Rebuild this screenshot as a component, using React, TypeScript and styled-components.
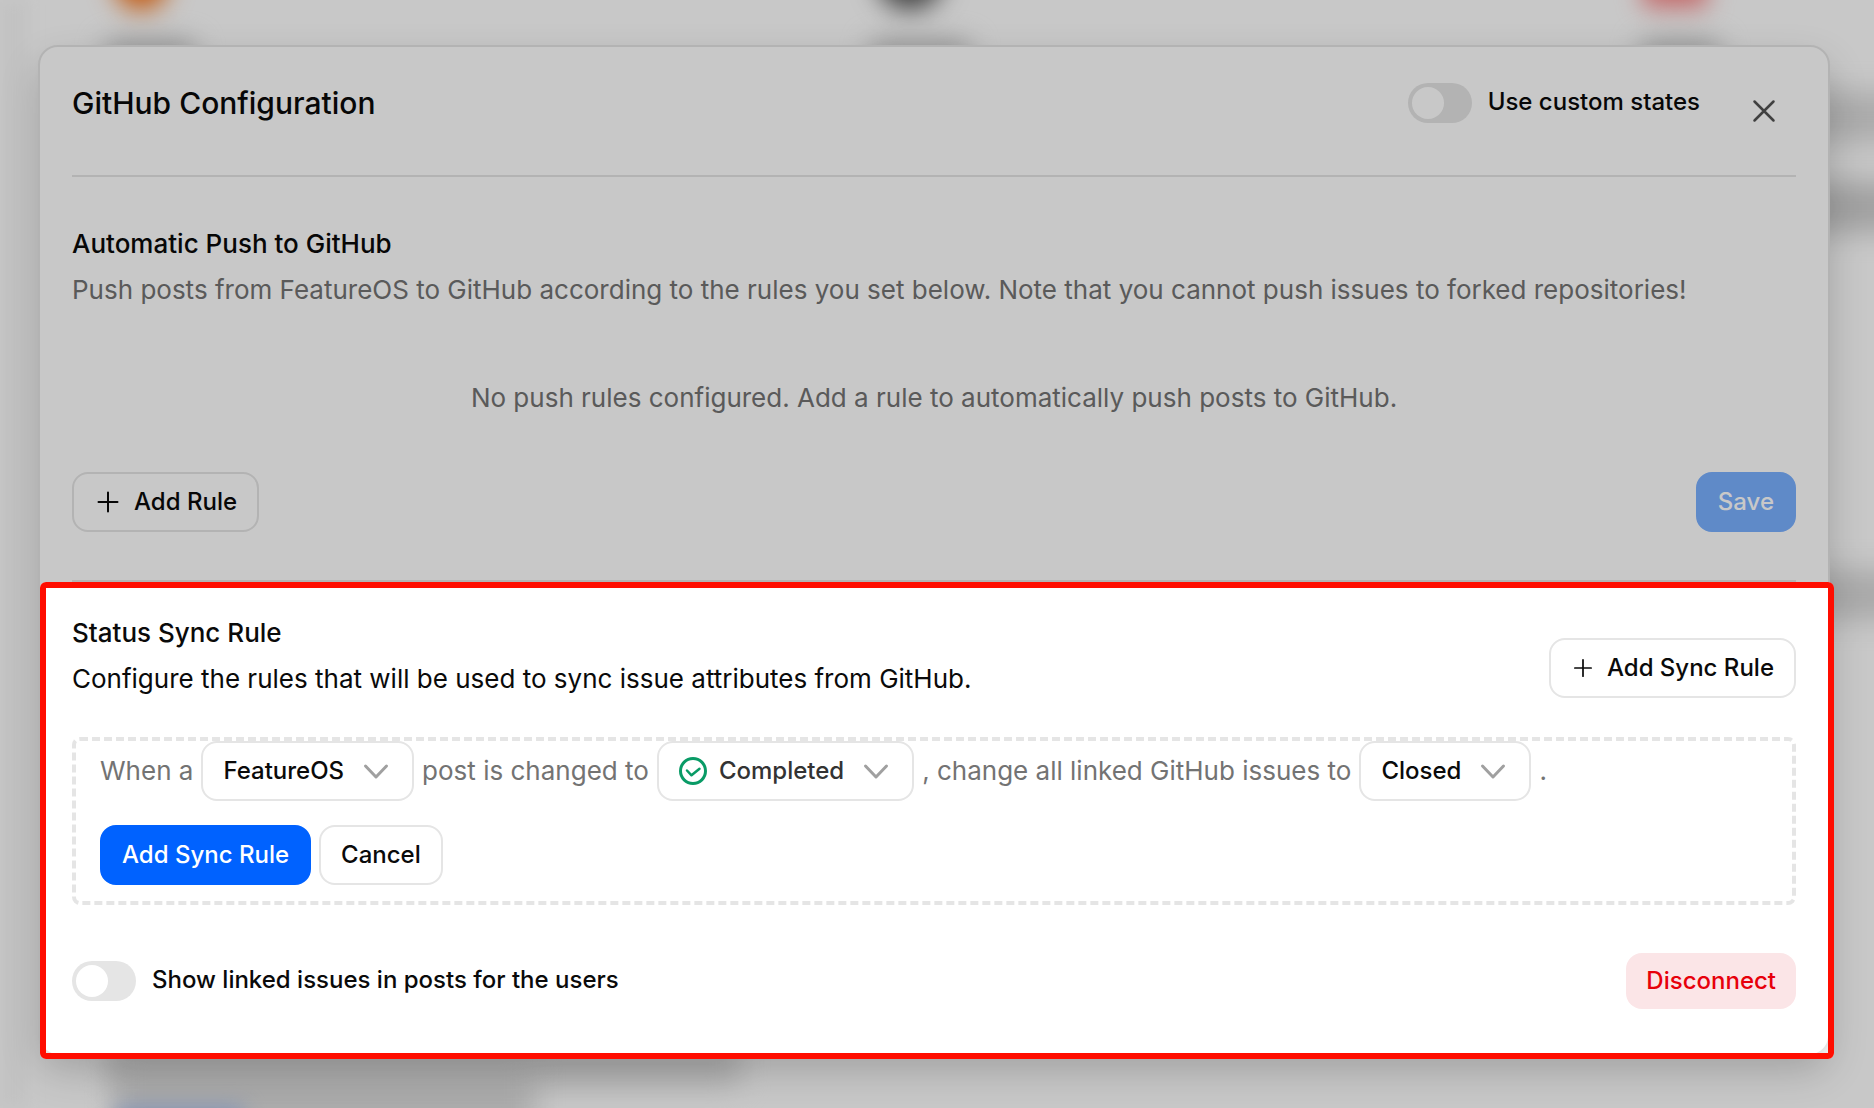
import React from 'react';
import styled, { createGlobalStyle, css } from 'styled-components';

const GlobalStyle = createGlobalStyle`
  *, *::before, *::after { box-sizing: border-box; }
  body { margin: 0; background: #fff; color: #0a0a0a; font-family: Inter, "Liberation Sans", sans-serif; }
  button, input, select { font: inherit; color: inherit; margin: 0; }
  h1, h2, p { margin: 0; }
`;

const Page = styled.div`
  position: relative;
  min-height: 100vh;
  padding: 45px 44px 48px 38px;
  overflow: hidden;
`;

const Backdrop = styled.div`
  position: absolute;
  inset: 0;
  overflow: hidden;
`;

const Blob = styled.span<{ $x: string; $y: string; $w: number; $h: number; $c: string; $r?: number; $blur?: number }>`
  position: absolute;
  left: ${p => p.$x};
  top: ${p => p.$y};
  width: ${p => p.$w}px;
  height: ${p => p.$h}px;
  border-radius: ${p => p.$r ?? 8}px;
  background: ${p => p.$c};
  filter: blur(${p => p.$blur ?? 14}px);
`;

const SideStrip = styled.div`
  width: 28px;
  height: 100%;
  background: #f8f8f8;
  filter: blur(8px);
`;

const Dialog = styled.main`
  position: relative;
  padding: 0 32px;
  border: 2px solid #e5e5e5;
  border-radius: 20px;
  background: #fff;
  box-shadow: 0 16px 40px -2px rgba(0, 0, 0, 0.2);
`;

const Header = styled.header`
  display: flex;
  align-items: center;
  justify-content: space-between;
  height: 130px;
  padding-bottom: 16px;
  border-bottom: 2px solid #e5e5e5;
`;

const Title = styled.h1`
  font-size: 30px;
  line-height: 40px;
  font-weight: 500;
`;

const HeaderActions = styled.div`
  display: flex;
  align-items: center;
  gap: 48px;
`;

const IconButton = styled.button`
  display: flex;
  padding: 0;
  margin: 16px 16px 0 0;
  border: 0;
  background: none;
  color: #525252;
`;

const ToggleField = styled.label`
  display: flex;
  align-items: center;
  gap: 16px;
  font-size: 24px;
  line-height: 36px;
  font-weight: 500;
`;

const Toggle = styled.input`
  appearance: none;
  width: 64px;
  height: 40px;
  padding: 4px;
  border-radius: 20px;
  background: #e5e5e5;
  &::before {
    content: '';
    display: block;
    width: 32px;
    height: 32px;
    border-radius: 50%;
    background: #fff;
  }
  &:checked::before { margin-left: 24px; }
`;

const ToggleText = styled.span`
  padding-bottom: 2px;
`;

const PushSection = styled.section`
  padding: 44px 0 48px;
  border-bottom: 2px solid #e5e5e5;
`;

const Heading = styled.h2`
  font-size: 26px;
  line-height: 46px;
  font-weight: 500;
`;

const Text = styled.p<{ $muted?: boolean }>`
  font-size: 26px;
  line-height: 46px;
  color: ${p => (p.$muted ? '#737373' : 'inherit')};
`;

const Empty = styled(Text)`
  padding: 62px 0 51px;
  text-align: center;
`;

const Row = styled.div`
  display: flex;
  align-items: center;
  justify-content: space-between;
`;

const SectionIntro = styled.div`
  padding-bottom: 24px;
`;

const variants = {
  outline: css`height: 60px; border: 2px solid #e5e5e5; background: #fff;`,
  primary: css`height: 60px; border: 2px solid #0062ff; background: #0062ff; color: #fff;`,
  faded: css`height: 60px; border: 2px solid #7ab0ff; background: #7ab0ff; color: #fff;`,
  danger: css`height: 56px; border: 0; background: #fbe5e7; color: #e7000b;`,
};

const Button = styled.button<{ $variant: keyof typeof variants }>`
  display: inline-flex;
  align-items: center;
  gap: 12px;
  padding: 0 20px;
  border-radius: 16px;
  font-size: 24px;
  line-height: 36px;
  font-weight: 500;
  white-space: nowrap;
  ${p => variants[p.$variant]}
`;

const SyncSection = styled.section`
  position: relative;
  margin: 0 -38px -5px -32px;
  padding: 22px 32px 44px 26px;
  border: 6px solid #ff0d00;
  border-radius: 6px;
  box-shadow: 0 0 0 4000px rgba(0, 0, 0, 0.216);
`;

const RuleForm = styled.form`
  display: flex;
  flex-direction: column;
  gap: 24px;
  margin: 11px 0 48px;
  padding: 0 24px 16px;
  border: 4px dashed #e5e5e5;
  border-radius: 8px;
`;

const Sentence = styled.div`
  display: flex;
  flex-wrap: wrap;
  align-items: center;
  gap: 8px;
  font-size: 26px;
  line-height: 46px;
  color: #737373;
`;

const Actions = styled.div`
  display: flex;
  gap: 8px;
`;

const Picker = styled.span`
  display: inline-grid;
  align-items: center;
  color: #0a0a0a;
  svg { grid-area: 1 / 1; pointer-events: none; z-index: 1; }
`;

const Select = styled.select<{ $icon?: boolean }>`
  grid-area: 1 / 1;
  appearance: none;
  field-sizing: content;
  height: 60px;
  padding: 0 68px 0 ${p => (p.$icon ? 60 : 20)}px;
  border: 2px solid #e5e5e5;
  border-radius: 16px;
  background: #fff;
  color: ${p => (p.$icon ? '#333' : '#0a0a0a')};
  font-size: 24px;
  font-weight: 500;
`;

const StatusIcon = styled.svg`
  margin-left: 22px;
`;

const ChevronIcon = styled.svg`
  justify-self: end;
  margin-right: 22px;
`;

const Plus = ({ size = 28 }: { size?: number }) => (
  <svg width={size} height={size} viewBox="0 0 28 28" fill="none" stroke="currentColor" strokeWidth="2" strokeLinecap="round">
    <path d="M14 4.5v19M4.5 14h19" />
  </svg>
);

const Chevron = () => (
  <ChevronIcon width="32" height="32" viewBox="0 0 32 32" fill="none" stroke="#a0a0a0" strokeWidth="3" strokeLinecap="round" strokeLinejoin="round">
    <path d="M5.5 11l10.5 11l10.5-11" />
  </ChevronIcon>
);

const Check = () => (
  <StatusIcon width="28" height="28" viewBox="0 0 28 28" fill="none" stroke="#099b66" strokeLinecap="round" strokeLinejoin="round">
    <circle cx="14" cy="14" r="12.5" strokeWidth="3" />
    <path d="M8 13.5l4.5 4.800l8-6.600" strokeWidth="2.5" />
  </StatusIcon>
);

function Dropdown({ label, options, icon }: { label: string; options: string[]; icon?: boolean }) {
  return (
    <Picker>
      <Select aria-label={label} $icon={icon} defaultValue={options[0]}>
        {options.map(o => <option key={o}>{o}</option>)}
      </Select>
      {icon && <Check />}
      <Chevron />
    </Picker>
  );
}

export default function App() {
  return (
    <>
      <GlobalStyle />
      <Page>
        <Backdrop aria-hidden="true">
          <SideStrip />
          <Blob $x="114px" $y="-52px" $w={54} $h={62} $r={27} $c="#f97316" $blur={13} />
          <Blob $x="105px" $y="42px" $w={90} $h={24} $c="#b4b4b4" />
          <Blob $x="876px" $y="-60px" $w={68} $h={70} $r={34} $c="#555" $blur={13} />
          <Blob $x="870px" $y="42px" $w={100} $h={24} $c="#b4b4b4" />
          <Blob $x="1642px" $y="-56px" $w={66} $h={64} $c="#fb8a8a" $blur={12} />
          <Blob $x="1640px" $y="42px" $w={80} $h={24} $c="#b4b4b4" />
          <Blob $x="1790px" $y="92px" $w={160} $h={50} $c="#dadada" />
          <Blob $x="1790px" $y="182px" $w={160} $h={50} $c="#cdcdcd" />
          <Blob $x="1790px" $y="570px" $w={160} $h={50} $c="#d8d8d8" />
          <Blob $x="110px" $y="1040px" $w={630} $h={46} $c="#dedede" />
          <Blob $x="115px" $y="1056px" $w={420} $h={76} $c="#dadada" />
          <Blob $x="115px" $y="1106px" $w={130} $h={30} $c="#a9bde6" $blur={10} />
        </Backdrop>
        <Dialog>
          <Header>
            <Title>GitHub Configuration</Title>
            <HeaderActions>
              <ToggleField>
                <Toggle type="checkbox" role="switch" />
                <ToggleText>Use custom states</ToggleText>
              </ToggleField>
              <IconButton type="button" aria-label="Close">
                <svg width="32" height="32" viewBox="0 0 32 32" fill="none" stroke="currentColor" strokeWidth="2.5" strokeLinecap="round">
                  <path d="M6.5 6.5l19 19M25.5 6.5l-19 19" />
                </svg>
              </IconButton>
            </HeaderActions>
          </Header>
          <PushSection>
            <Heading>Automatic Push to GitHub</Heading>
            <Text $muted>
              Push posts from FeatureOS to GitHub according to the rules you set below. Note that you cannot push issues to forked repositories!
            </Text>
            <Empty $muted>No push rules configured. Add a rule to automatically push posts to GitHub.</Empty>
            <Row>
              <Button type="button" $variant="outline"><Plus />Add Rule</Button>
              <Button type="button" $variant="faded">Save</Button>
            </Row>
          </PushSection>
          <SyncSection>
            <Row>
              <SectionIntro>
                <Heading>Status Sync Rule</Heading>
                <Text>Configure the rules that will be used to sync issue attributes from GitHub.</Text>
              </SectionIntro>
              <Button type="button" $variant="outline"><Plus size={24} />Add Sync Rule</Button>
            </Row>
            <RuleForm>
              <Sentence>
                <span>When a</span>
                <Dropdown label="Source" options={['FeatureOS']} />
                <span>post is changed to</span>
                <Dropdown label="Status" options={['Completed']} icon />
                <span>, change all linked GitHub issues to</span>
                <Dropdown label="Issue state" options={['Closed', 'Open']} />
                <span>.</span>
              </Sentence>
              <Actions>
                <Button type="button" $variant="primary">Add Sync Rule</Button>
                <Button type="button" $variant="outline">Cancel</Button>
              </Actions>
            </RuleForm>
            <Row>
              <ToggleField>
                <Toggle type="checkbox" role="switch" />
                <ToggleText>Show linked issues in posts for the users</ToggleText>
              </ToggleField>
              <Button type="button" $variant="danger">Disconnect</Button>
            </Row>
          </SyncSection>
        </Dialog>
      </Page>
    </>
  );
}
